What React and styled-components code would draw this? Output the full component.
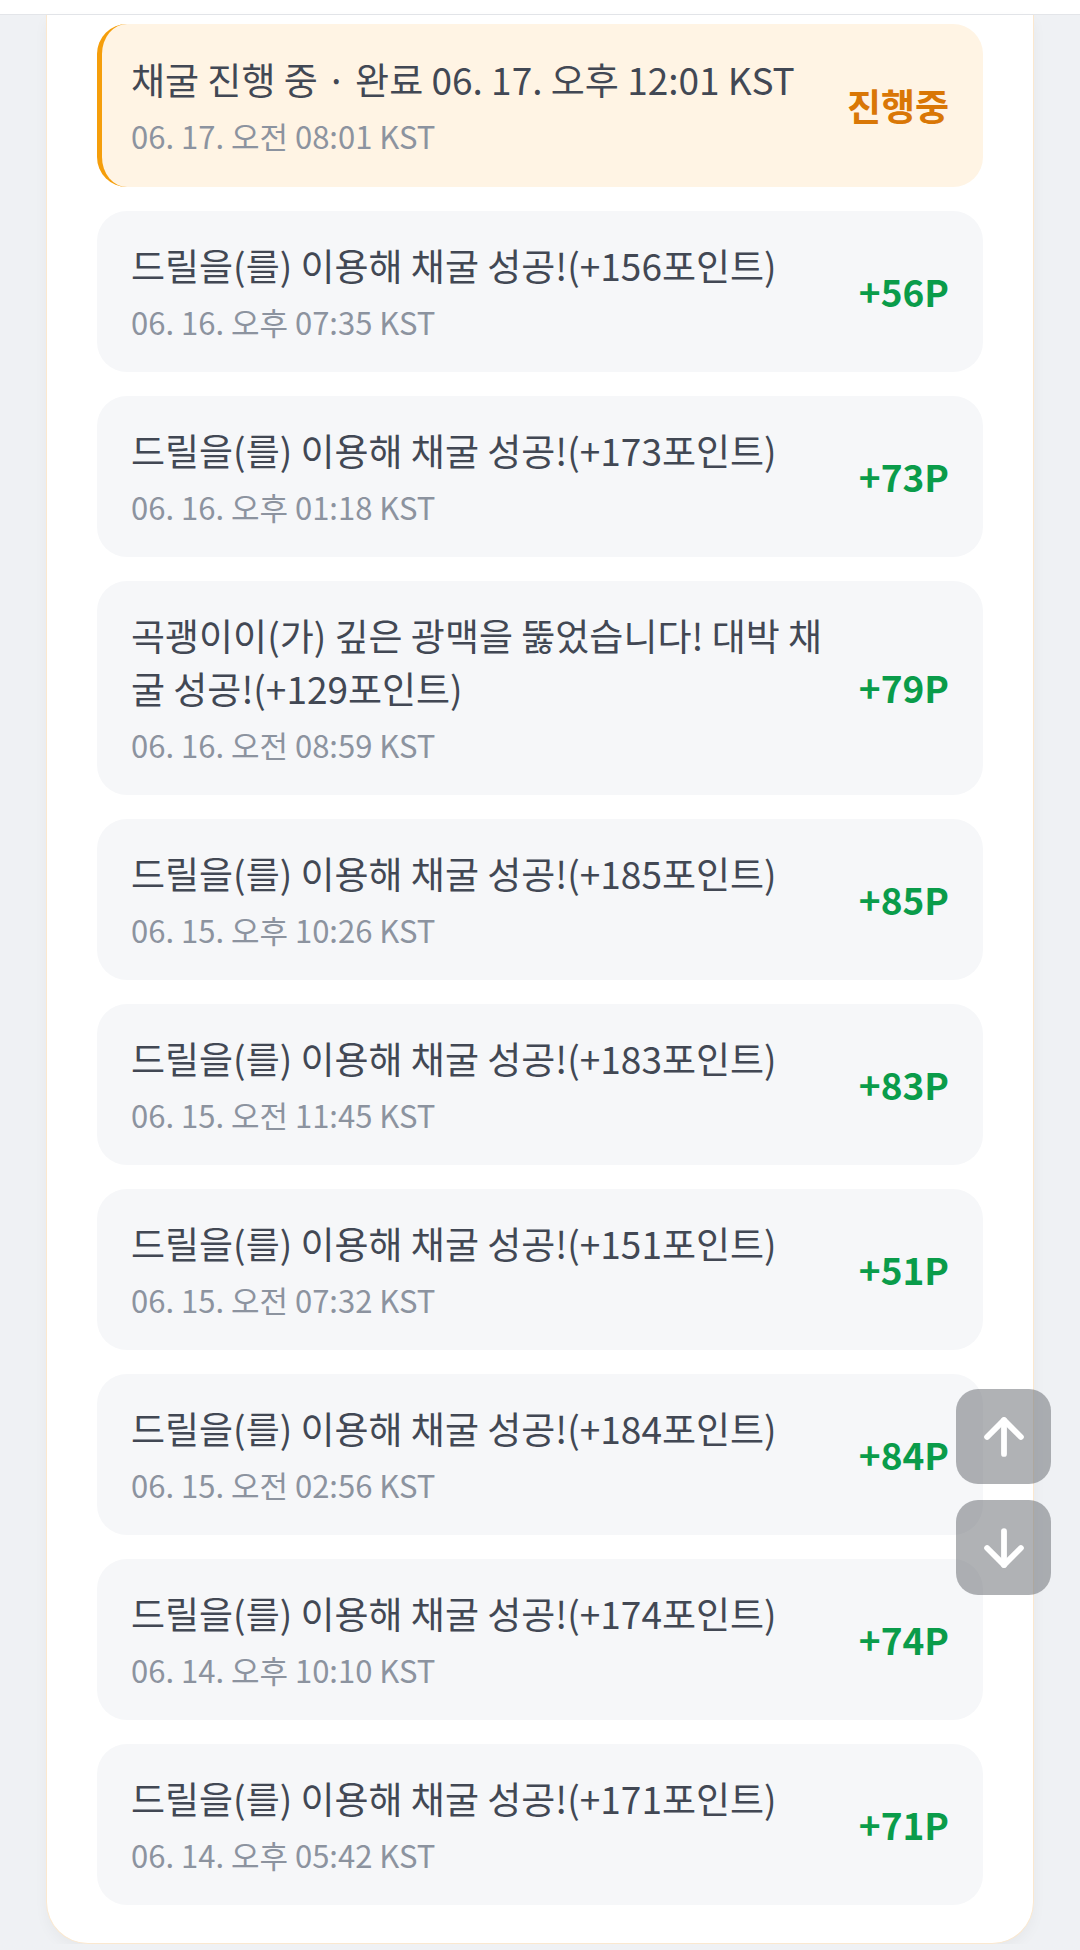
import React from "react";
import styled, { createGlobalStyle } from "styled-components";
import { ArrowUp, ArrowDown } from "lucide-react";

const GlobalStyle = createGlobalStyle`
  html, body {
    margin: 0;
    padding: 0;
    background: #eff1f4;
    font-family: "Noto Sans CJK KR", "Noto Sans", sans-serif;
  }
  * { box-sizing: border-box; }
`;

const TopBar = styled.div`
  height: 15px;
  background: #ffffff;
  border-bottom: 1px solid #e3e5e9;
`;

const Card = styled.section`
  margin: 0 46px;
  background: #ffffff;
  border: 1.5px solid #fbe8cf;
  border-top: none;
  border-radius: 0 0 42px 42px;
  padding: 9px 50px 38px;
  box-shadow: 0 6px 14px rgba(0, 0, 0, 0.04);
`;

const List = styled.div`
  display: flex;
  flex-direction: column;
  gap: 24px;
`;

const Item = styled.div`
  display: flex;
  align-items: center;
  gap: 24px;
  padding: ${(p) => (p.$active ? "29px 34px 31px 29px" : "28px 34px 30px")};
  border-radius: 30px;
  background: ${(p) => (p.$active ? "#fff4e4" : "#f6f7f9")};
  border-left: ${(p) => (p.$active ? "5px solid #f59e0b" : "none")};
`;

const Body = styled.div`
  flex: 1;
  min-width: 0;
`;

const Title = styled.div`
  font-size: 37px;
  line-height: 53px;
  color: #424854;
`;

const Time = styled.div`
  margin-top: 10px;
  font-size: 31px;
  line-height: 40px;
  color: #8c939f;
`;

const Points = styled.div`
  flex-shrink: 0;
  font-size: 37px;
  font-weight: 700;
  color: ${(p) => (p.$active ? "#d97706" : "#0a9c4a")};
`;

const ScrollButtons = styled.div`
  position: fixed;
  right: 29px;
  top: 1389px;
  display: flex;
  flex-direction: column;
  gap: 16px;
`;

const ScrollButton = styled.button`
  width: 95px;
  height: 95px;
  border: none;
  border-radius: 22px;
  background: rgba(112, 114, 120, 0.55);
  display: flex;
  align-items: center;
  justify-content: center;
  padding: 0;
  color: #ffffff;
`;

const history = [
  { title: "드릴을(를) 이용해 채굴 성공!(+156포인트)", time: "06. 16. 오후 07:35 KST", points: "+56P" },
  { title: "드릴을(를) 이용해 채굴 성공!(+173포인트)", time: "06. 16. 오후 01:18 KST", points: "+73P" },
  { title: "곡괭이이(가) 깊은 광맥을 뚫었습니다! 대박 채굴 성공!(+129포인트)", time: "06. 16. 오전 08:59 KST", points: "+79P" },
  { title: "드릴을(를) 이용해 채굴 성공!(+185포인트)", time: "06. 15. 오후 10:26 KST", points: "+85P" },
  { title: "드릴을(를) 이용해 채굴 성공!(+183포인트)", time: "06. 15. 오전 11:45 KST", points: "+83P" },
  { title: "드릴을(를) 이용해 채굴 성공!(+151포인트)", time: "06. 15. 오전 07:32 KST", points: "+51P" },
  { title: "드릴을(를) 이용해 채굴 성공!(+184포인트)", time: "06. 15. 오전 02:56 KST", points: "+84P" },
  { title: "드릴을(를) 이용해 채굴 성공!(+174포인트)", time: "06. 14. 오후 10:10 KST", points: "+74P" },
  { title: "드릴을(를) 이용해 채굴 성공!(+171포인트)", time: "06. 14. 오후 05:42 KST", points: "+71P" },
];

export default function App() {
  return (
    <>
      <GlobalStyle />
      <TopBar />
      <Card>
        <List>
          <Item $active>
            <Body>
              <Title>채굴 진행 중 · 완료 06. 17. 오후 12:01 KST</Title>
              <Time>06. 17. 오전 08:01 KST</Time>
            </Body>
            <Points $active>진행중</Points>
          </Item>
          {history.map((h, i) => (
            <Item key={i}>
              <Body>
                <Title>{h.title}</Title>
                <Time>{h.time}</Time>
              </Body>
              <Points>{h.points}</Points>
            </Item>
          ))}
        </List>
      </Card>
      <ScrollButtons>
        <ScrollButton aria-label="맨 위로">
          <ArrowUp size={58} strokeWidth={2.4} />
        </ScrollButton>
        <ScrollButton aria-label="맨 아래로">
          <ArrowDown size={58} strokeWidth={2.4} />
        </ScrollButton>
      </ScrollButtons>
    </>
  );
}
